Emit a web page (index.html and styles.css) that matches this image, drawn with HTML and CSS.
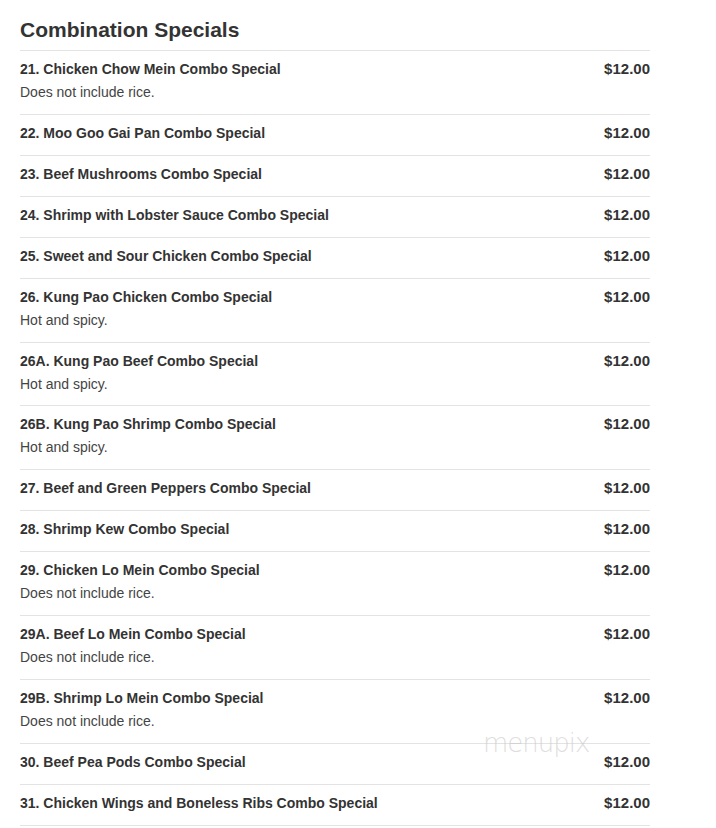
FILE: index.html
```html
<!DOCTYPE html>
<html>
<head>
<meta charset="utf-8">
<link rel="stylesheet" href="styles.css">
</head>
<body>
<div class="menu">
  <h2 class="title">Combination Specials</h2>
  <div class="item"><div class="row"><span class="name">21. Chicken Chow Mein Combo Special</span><span class="price">$12.00</span></div><div class="desc">Does not include rice.</div></div>
  <div class="item"><div class="row"><span class="name">22. Moo Goo Gai Pan Combo Special</span><span class="price">$12.00</span></div></div>
  <div class="item"><div class="row"><span class="name">23. Beef Mushrooms Combo Special</span><span class="price">$12.00</span></div></div>
  <div class="item"><div class="row"><span class="name">24. Shrimp with Lobster Sauce Combo Special</span><span class="price">$12.00</span></div></div>
  <div class="item"><div class="row"><span class="name">25. Sweet and Sour Chicken Combo Special</span><span class="price">$12.00</span></div></div>
  <div class="item"><div class="row"><span class="name">26. Kung Pao Chicken Combo Special</span><span class="price">$12.00</span></div><div class="desc">Hot and spicy.</div></div>
  <div class="item"><div class="row"><span class="name">26A. Kung Pao Beef Combo Special</span><span class="price">$12.00</span></div><div class="desc">Hot and spicy.</div></div>
  <div class="item"><div class="row"><span class="name">26B. Kung Pao Shrimp Combo Special</span><span class="price">$12.00</span></div><div class="desc">Hot and spicy.</div></div>
  <div class="item"><div class="row"><span class="name">27. Beef and Green Peppers Combo Special</span><span class="price">$12.00</span></div></div>
  <div class="item"><div class="row"><span class="name">28. Shrimp Kew Combo Special</span><span class="price">$12.00</span></div></div>
  <div class="item"><div class="row"><span class="name">29. Chicken Lo Mein Combo Special</span><span class="price">$12.00</span></div><div class="desc">Does not include rice.</div></div>
  <div class="item"><div class="row"><span class="name">29A. Beef Lo Mein Combo Special</span><span class="price">$12.00</span></div><div class="desc">Does not include rice.</div></div>
  <div class="item"><div class="row"><span class="name">29B. Shrimp Lo Mein Combo Special</span><span class="price">$12.00</span></div><div class="desc">Does not include rice.</div></div>
  <div class="item"><div class="row"><span class="name">30. Beef Pea Pods Combo Special</span><span class="price">$12.00</span></div></div>
  <div class="item"><div class="row"><span class="name">31. Chicken Wings and Boneless Ribs Combo Special</span><span class="price">$12.00</span></div></div>
  <div class="item last"></div>
</div>
<div class="watermark">menupix</div>
</body>
</html>
```
FILE: styles.css
```css
html, body {
  margin: 0;
  padding: 0;
  background: #fff;
}
body {
  font-family: "Liberation Sans", Arial, sans-serif;
  color: #333;
  position: relative;
  overflow: hidden;
  height: 828px;
}
.menu {
  width: 630px;
  margin-left: 20px;
  padding-top: 16px;
}
.title {
  margin: 0;
  font-size: 21px;
  line-height: 28px;
  font-weight: bold;
  color: #333;
  padding-bottom: 6px;
}
.item {
  border-top: 1px solid #e3e3e3;
  padding: 8px 0 11.93px;
}
.item.last {
  padding: 0;
}
.row {
  display: flex;
  justify-content: space-between;
  align-items: center;
  line-height: 20px;
}
.name {
  font-weight: bold;
  font-size: 14px;
  color: #333;
}
.price {
  font-weight: bold;
  font-size: 15px;
  color: #333;
}
.desc {
  margin-top: 3px;
  font-size: 14px;
  line-height: 20px;
  color: #444;
}
.watermark {
  position: absolute;
  left: 483px;
  top: 728px;
  font-family: "DejaVu Sans", sans-serif;
  font-size: 26px;
  font-weight: 200;
  letter-spacing: -1px;
  color: rgba(200, 200, 200, 0.6);
}
```
